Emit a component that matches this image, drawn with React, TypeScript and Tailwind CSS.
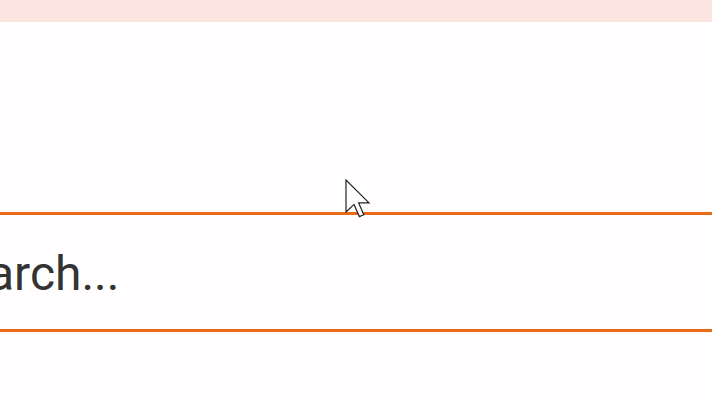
import React from "react";

export default function App() {
  return (
    <div className="relative w-[712px] h-[400px] overflow-hidden bg-[#fffdfd]" style={{ fontFamily: "Roboto, sans-serif" }}>
      <div className="h-[22px] bg-[#fce5e1]" />
      <div className="h-[190px]" />
      <div className="h-[120px] border-y-[3px] border-[#ea6a19] flex items-center">
        <span className="ml-[-66px] text-[48px] leading-none text-[#333333] whitespace-nowrap pt-[4px]">Search...</span>
      </div>
      <svg className="absolute left-[345px] top-[179px]" width="26" height="40" viewBox="0 0 13 20">
        <path d="M0.5 0.5 L0.5 16.5 L4.5 12.7 L7.2 18.8 L9.4 17.9 L6.8 11.9 L12 11.9 Z" fill="#ffffff" stroke="#222222" strokeWidth="0.6" strokeLinejoin="miter" />
      </svg>
    </div>
  );
}
